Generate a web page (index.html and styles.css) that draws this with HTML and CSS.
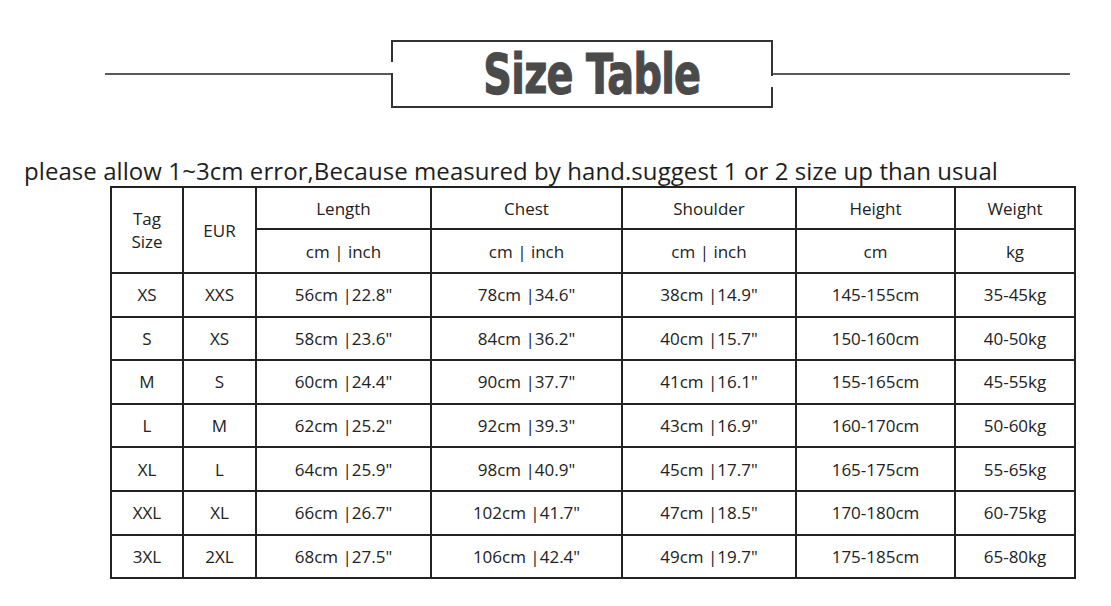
FILE: index.html
```html
<!DOCTYPE html>
<html>
<head>
<meta charset="utf-8">
<link rel="stylesheet" href="styles.css">
</head>
<body>
<div class="page">
  <header class="title-bar">
    <div class="rule rule-left"></div>
    <div class="title-box"><h1 class="title">Size Table</h1></div>
    <div class="rule rule-right"></div>
  </header>
  <p class="note">please allow 1~3cm error,Because measured by hand.suggest 1 or 2 size up than usual</p>
  <table class="size-table">
    <colgroup>
      <col class="c-tag"><col class="c-eur"><col class="c-len"><col class="c-chest"><col class="c-sh"><col class="c-h"><col class="c-w">
    </colgroup>
    <thead>
      <tr class="hrow">
        <th rowspan="2" class="tag">Tag<br>Size</th>
        <th rowspan="2">EUR</th>
        <th>Length</th>
        <th>Chest</th>
        <th>Shoulder</th>
        <th>Height</th>
        <th>Weight</th>
      </tr>
      <tr class="hrow2">
        <th>cm | inch</th>
        <th>cm | inch</th>
        <th>cm | inch</th>
        <th>cm</th>
        <th>kg</th>
      </tr>
    </thead>
    <tbody>
      <tr><td>XS</td><td>XXS</td><td>56cm |22.8"</td><td>78cm |34.6"</td><td>38cm |14.9"</td><td>145-155cm</td><td>35-45kg</td></tr>
      <tr><td>S</td><td>XS</td><td>58cm |23.6"</td><td>84cm |36.2"</td><td>40cm |15.7"</td><td>150-160cm</td><td>40-50kg</td></tr>
      <tr><td>M</td><td>S</td><td>60cm |24.4"</td><td>90cm |37.7"</td><td>41cm |16.1"</td><td>155-165cm</td><td>45-55kg</td></tr>
      <tr><td>L</td><td>M</td><td>62cm |25.2"</td><td>92cm |39.3"</td><td>43cm |16.9"</td><td>160-170cm</td><td>50-60kg</td></tr>
      <tr><td>XL</td><td>L</td><td>64cm |25.9"</td><td>98cm |40.9"</td><td>45cm |17.7"</td><td>165-175cm</td><td>55-65kg</td></tr>
      <tr><td>XXL</td><td>XL</td><td>66cm |26.7"</td><td>102cm |41.7"</td><td>47cm |18.5"</td><td>170-180cm</td><td>60-75kg</td></tr>
      <tr><td>3XL</td><td>2XL</td><td>68cm |27.5"</td><td>106cm |42.4"</td><td>49cm |19.7"</td><td>175-185cm</td><td>65-80kg</td></tr>
    </tbody>
  </table>
</div>
</body>
</html>
```
FILE: styles.css
```css
html, body {
  margin: 0;
  padding: 0;
  background: #ffffff;
}
.page {
  width: 1111px;
  height: 606px;
  overflow: hidden;
  font-family: "Open Sans", "Noto Sans", sans-serif;
  color: #222222;
}
.title-bar {
  display: flex;
  align-items: center;
  padding: 40px 0 0 105px;
}
.rule {
  height: 2px;
  background: #5a5a5a;
}
.rule-left { width: 286px; }
.rule-right { width: 297px; }
.title-box {
  position: relative;
  box-sizing: border-box;
  width: 382px;
  height: 68px;
  border: 2px solid #333333;
  display: flex;
  align-items: center;
  justify-content: center;
  padding-left: 20px;
}
.title-box::before,
.title-box::after {
  content: "";
  position: absolute;
  width: 4px;
  height: 11px;
  background: #ffffff;
}
.title-box::before {
  left: -3px;
  top: 20px;
}
.title-box::after {
  right: -3px;
  top: 34px;
}
.title {
  margin: 0;
  font-family: "DejaVu Sans", "Liberation Sans", sans-serif;
  font-weight: 700;
  font-size: 56px;
  line-height: 60px;
  color: #4a4a4a;
  letter-spacing: -1px;
  transform: scaleX(0.71);
  -webkit-text-stroke: 1.2px #4a4a4a;
}
.note {
  margin: 50px 0 0 0;
  padding-left: 24px;
  font-size: 24px;
  line-height: 26px;
  letter-spacing: 0.07px;
  color: #1e1e1e;
  white-space: nowrap;
}
.size-table {
  margin: 2px 0 0 110px;
  border-collapse: collapse;
  table-layout: fixed;
  width: 966px;
  font-size: 17px;
  color: #222222;
}
.size-table th,
.size-table td {
  border: 2px solid #222222;
  padding: 0;
  text-align: center;
  vertical-align: middle;
  font-weight: 400;
  white-space: nowrap;
}
.c-tag { width: 72px; }
.c-eur { width: 73px; }
.c-len { width: 175px; }
.c-chest { width: 191px; }
.c-sh { width: 174px; }
.c-h { width: 159px; }
.c-w { width: 120px; }
.hrow th { height: 40px; }
.hrow2 th { height: 42px; }
.tag { line-height: 23px; }
.size-table td { height: 41.6px; }
```
